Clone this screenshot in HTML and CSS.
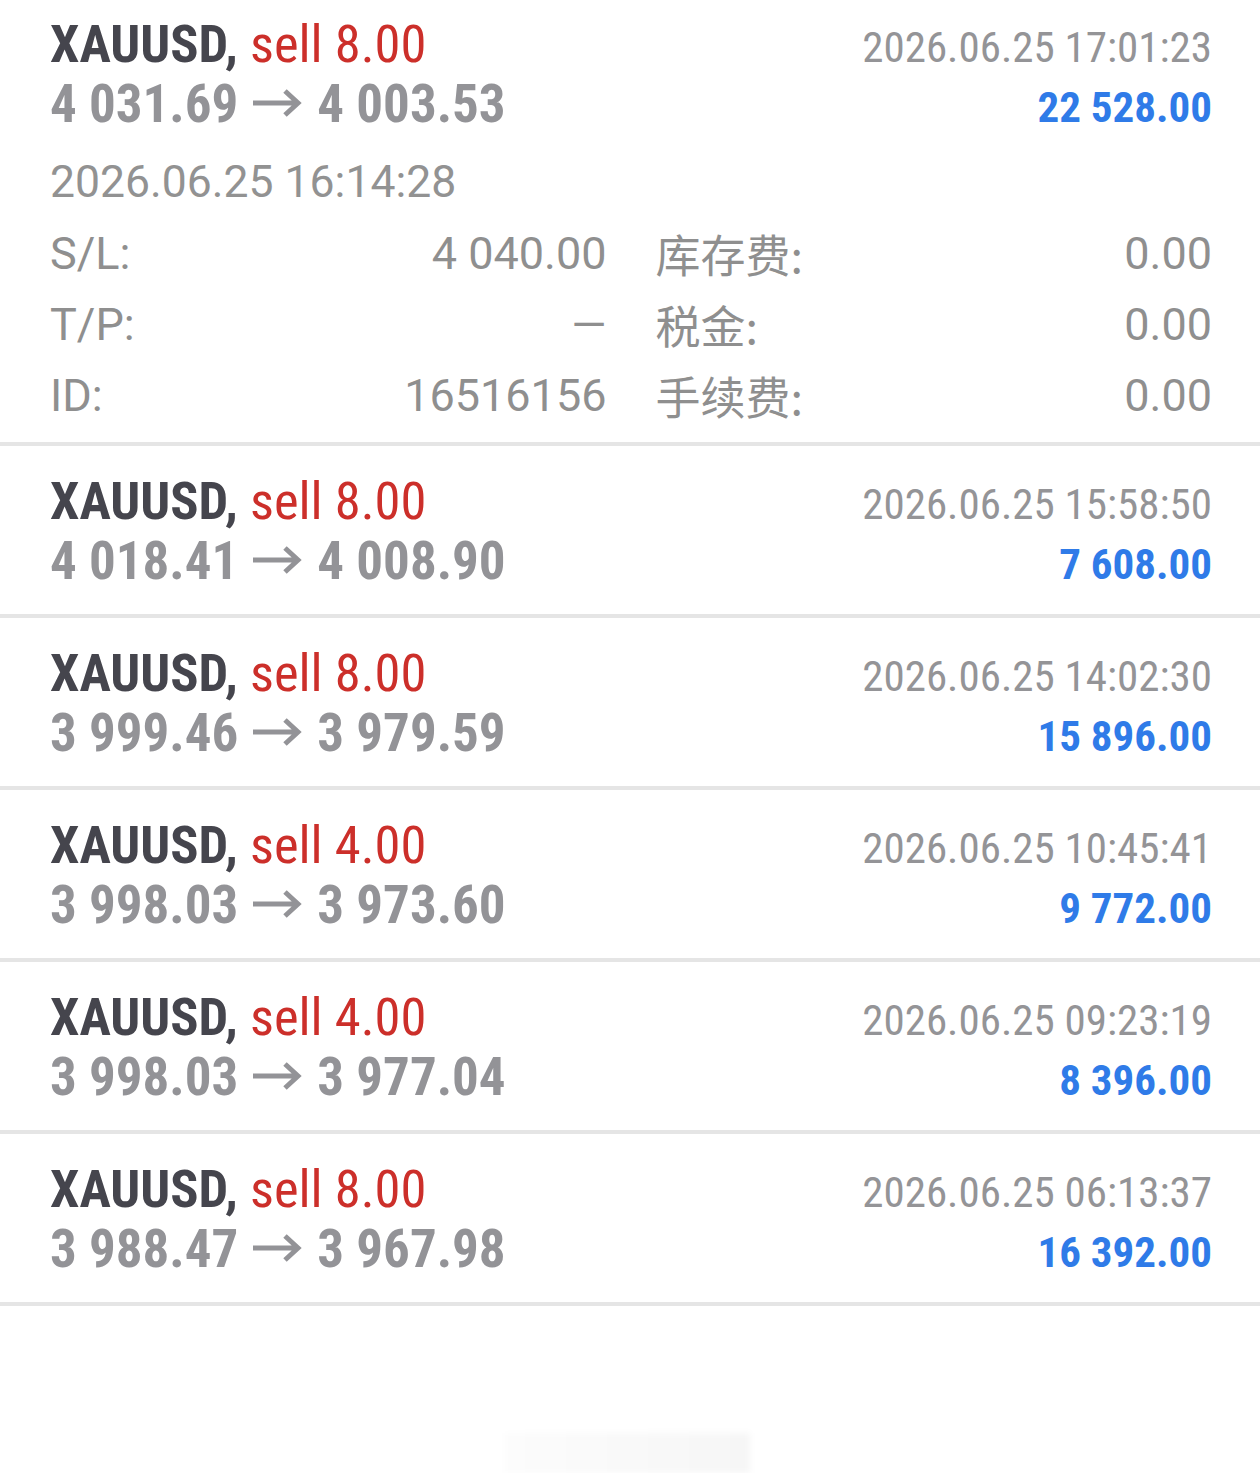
FILE: index.html
```html
<!DOCTYPE html>
<html lang="zh-CN">
<head>
    <meta charset="UTF-8">
    <meta name="viewport" content="width=device-width, initial-scale=1.0">
    <title>History</title>
    <link rel="stylesheet" href="styles.css">
</head>
<body>
    <section class="deals">
        <div class="deal deal-open">
            <div class="line">
                <div class="title"><span class="symbol">XAUUSD,</span> <span class="side">sell 8.00</span></div>
                <div class="time">2026.06.25 17:01:23</div>
            </div>
            <div class="line">
                <div class="prices">4 031.69<svg class="arrow" viewBox="0 0 52 30"><path d="M2 15H47M34 3L47 15L34 27"/></svg>4 003.53</div>
                <div class="profit">22 528.00</div>
            </div>
            <div class="open-time">2026.06.25 16:14:28</div>
            <div class="details">
                <div class="pair"><span>S/L:</span><span>4 040.00</span></div>
                <div class="pair"><span class="cn">库存费:</span><span>0.00</span></div>
                <div class="pair"><span>T/P:</span><span>—</span></div>
                <div class="pair"><span class="cn">税金:</span><span>0.00</span></div>
                <div class="pair"><span>ID:</span><span>16516156</span></div>
                <div class="pair"><span class="cn">手续费:</span><span>0.00</span></div>
            </div>
        </div>

        <div class="deal">
            <div class="line">
                <div class="title"><span class="symbol">XAUUSD,</span> <span class="side">sell 8.00</span></div>
                <div class="time">2026.06.25 15:58:50</div>
            </div>
            <div class="line">
                <div class="prices">4 018.41<svg class="arrow" viewBox="0 0 52 30"><path d="M2 15H47M34 3L47 15L34 27"/></svg>4 008.90</div>
                <div class="profit">7 608.00</div>
            </div>
        </div>

        <div class="deal">
            <div class="line">
                <div class="title"><span class="symbol">XAUUSD,</span> <span class="side">sell 8.00</span></div>
                <div class="time">2026.06.25 14:02:30</div>
            </div>
            <div class="line">
                <div class="prices">3 999.46<svg class="arrow" viewBox="0 0 52 30"><path d="M2 15H47M34 3L47 15L34 27"/></svg>3 979.59</div>
                <div class="profit">15 896.00</div>
            </div>
        </div>

        <div class="deal">
            <div class="line">
                <div class="title"><span class="symbol">XAUUSD,</span> <span class="side">sell 4.00</span></div>
                <div class="time">2026.06.25 10:45:41</div>
            </div>
            <div class="line">
                <div class="prices">3 998.03<svg class="arrow" viewBox="0 0 52 30"><path d="M2 15H47M34 3L47 15L34 27"/></svg>3 973.60</div>
                <div class="profit">9 772.00</div>
            </div>
        </div>

        <div class="deal">
            <div class="line">
                <div class="title"><span class="symbol">XAUUSD,</span> <span class="side">sell 4.00</span></div>
                <div class="time">2026.06.25 09:23:19</div>
            </div>
            <div class="line">
                <div class="prices">3 998.03<svg class="arrow" viewBox="0 0 52 30"><path d="M2 15H47M34 3L47 15L34 27"/></svg>3 977.04</div>
                <div class="profit">8 396.00</div>
            </div>
        </div>

        <div class="deal">
            <div class="line">
                <div class="title"><span class="symbol">XAUUSD,</span> <span class="side">sell 8.00</span></div>
                <div class="time">2026.06.25 06:13:37</div>
            </div>
            <div class="line">
                <div class="prices">3 988.47<svg class="arrow" viewBox="0 0 52 30"><path d="M2 15H47M34 3L47 15L34 27"/></svg>3 967.98</div>
                <div class="profit">16 392.00</div>
            </div>
        </div>
    </section>

    <div class="smudge"></div>
</body>
</html>
```
FILE: styles.css
```css
body {
    margin: 0;
    padding: 0;
    background-color: #ffffff;
    font-family: "Roboto Condensed", Roboto, sans-serif;
}

.deal {
    padding: 25px 48px 23px 50px;
    border-bottom: 4px solid #e5e5e5;
}

.deal-open {
    padding-top: 14px;
    padding-bottom: 11px;
}

.line {
    display: flex;
    justify-content: space-between;
    align-items: baseline;
    height: 60px;
    line-height: 60px;
    white-space: nowrap;
}

.title {
    font-size: 52.5px;
}

.symbol {
    color: #45454d;
    font-weight: bold;
}

.side {
    color: #cc2f2a;
}

.prices {
    font-size: 53px;
    font-weight: bold;
    color: #939397;
}

.arrow {
    width: 52px;
    height: 30px;
    margin: 0 14px 0 13px;
    vertical-align: 4px;
}

.arrow path {
    fill: none;
    stroke: #939397;
    stroke-width: 5;
}

.time {
    font-size: 43px;
    color: #949497;
}

.profit {
    font-size: 43px;
    font-weight: bold;
    color: #2f7be8;
}

.open-time {
    font-family: Roboto, sans-serif;
    font-size: 44.5px;
    color: #929292;
    line-height: 71px;
    margin-top: 13px;
}

.details {
    display: grid;
    grid-template-columns: 1fr 1fr;
    column-gap: 49px;
    font-family: Roboto, "Noto Sans CJK SC", sans-serif;
    font-size: 45px;
    color: #8f8f8f;
    line-height: 71px;
}

.pair {
    display: flex;
    justify-content: space-between;
}

.cn {
    font-family: "Noto Sans CJK SC", sans-serif;
    font-size: 45px;
}

.smudge {
    width: 245px;
    height: 40px;
    margin: 127px 0 0 505px;
    background: linear-gradient(90deg, rgba(0, 0, 0, 0.01), rgba(0, 0, 0, 0.035));
    filter: blur(3px);
}
```
